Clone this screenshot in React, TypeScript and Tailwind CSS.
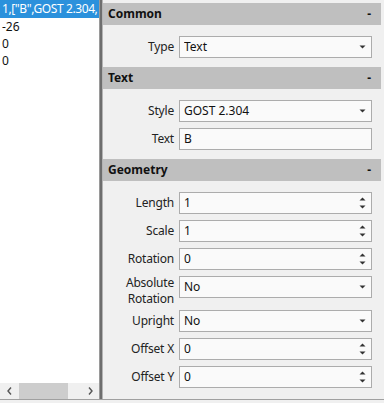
import React from 'react';

const font = { fontFamily: '"Noto Sans", "Open Sans", Arial, sans-serif' };

function DropArrow() {
  return (
    <svg width="7" height="4" viewBox="0 0 7 4" className="shrink-0">
      <path d="M0.5 0.5 L6.5 0.5 L3.5 3.5 Z" fill="#333" />
    </svg>
  );
}

function Spin() {
  return (
    <div className="flex flex-col justify-between h-full py-[4px] shrink-0">
      <svg width="7" height="4" viewBox="0 0 7 4">
        <path d="M0.5 3.5 L6.5 3.5 L3.5 0.5 Z" fill="#333" />
      </svg>
      <svg width="7" height="4" viewBox="0 0 7 4">
        <path d="M0.5 0.5 L6.5 0.5 L3.5 3.5 Z" fill="#333" />
      </svg>
    </div>
  );
}

type Kind = 'combo' | 'spin' | 'text';

function Field({ value, kind }: { value: string; kind: Kind }) {
  return (
    <div className="w-[193px] h-[22px] shrink-0 border border-[#acacac] bg-[#fafafa] flex items-center pl-[4px] pr-[5px] text-[12px] text-[#111]">
      <span className="flex-1 truncate">{value}</span>
      {kind === 'combo' && <DropArrow />}
      {kind === 'spin' && <Spin />}
    </div>
  );
}

function Row({ label, value, kind, tall }: { label: React.ReactNode; value: string; kind: Kind; tall?: boolean }) {
  return (
    <div className={`flex items-start ${tall ? 'h-[28px]' : 'h-[22px]'}`}>
      <div
        className={`w-[71px] shrink-0 text-right text-[12px] text-[#222] tracking-[-0.2px] ${tall ? 'leading-[16px] -mt-[1px]' : 'leading-[22px]'}`}
      >
        {label}
      </div>
      <div className="w-[5px] shrink-0" />
      <Field value={value} kind={kind} />
    </div>
  );
}

function Section({ title, children }: { title: string; children: React.ReactNode }) {
  return (
    <div className="flex flex-col">
      <div className="h-[22px] bg-[#bfbfbf] flex items-center justify-between px-[5px] text-[12px] font-bold text-[#111]">
        <span>{title}</span>
        <span className="pr-[5px]">-</span>
      </div>
      <div className="flex flex-col gap-[6px] pt-[11px] pb-[9px]">{children}</div>
    </div>
  );
}

export default function App() {
  const rows = ['-26', '0', '0'];
  return (
    <div className="w-[384px] h-[403px] bg-[#f0f0f0] flex flex-col overflow-hidden" style={font}>
      <div className="flex h-[399px]">
        {/* list */}
        <div className="w-[100px] shrink-0 bg-white flex flex-col border-r border-[#9a9a9a]">
          <div className="flex-1 overflow-hidden text-[12px] text-[#111]">
            <div className="h-[18px] bg-[#2b91dc] text-white pl-[2px] leading-[18px] whitespace-nowrap overflow-hidden tracking-[-0.4px]">
              1,["B",GOST 2.304,
            </div>
            {rows.map((r, i) => (
              <div key={i} className="h-[17px] pl-[2px] leading-[17px] whitespace-nowrap">
                {r}
              </div>
            ))}
          </div>
          <div className="h-[16px] bg-[#f0f0f0] flex items-center">
            <div className="w-[19px] flex justify-center">
              <svg width="5" height="8" viewBox="0 0 5 8">
                <path d="M4 0.5 L1 4 L4 7.5" stroke="#555" strokeWidth="1.4" fill="none" />
              </svg>
            </div>
            <div className="w-[49px] h-full bg-[#cdcdcd]" />
            <div className="flex-1" />
            <div className="w-[17px] flex justify-center">
              <svg width="5" height="8" viewBox="0 0 5 8">
                <path d="M1 0.5 L4 4 L1 7.5" stroke="#555" strokeWidth="1.4" fill="none" />
              </svg>
            </div>
          </div>
        </div>
        {/* splitter */}
        <div className="w-[2px] shrink-0 bg-[#6e6e6e]" />
        <div className="w-[1px] shrink-0 bg-[#b4b4b4]" />
        {/* property panel */}
        <div className="flex-1 flex flex-col pt-[3px] pr-[3px]">
          <div className="flex flex-col border-b border-[#a8a8a8] pb-[3px]">
            <Section title="Common">
              <Row label="Type" value="Text" kind="combo" />
            </Section>
            <Section title="Text">
              <Row label="Style" value="GOST 2.304" kind="combo" />
              <Row label="Text" value="B" kind="text" />
            </Section>
            <Section title="Geometry">
              <Row label="Length" value="1" kind="spin" />
              <Row label="Scale" value="1" kind="spin" />
              <Row label="Rotation" value="0" kind="spin" />
              <Row
                label={
                  <>
                    Absolute
                    <br />
                    Rotation
                  </>
                }
                value="No"
                kind="combo"
                tall
              />
              <Row label="Upright" value="No" kind="combo" />
              <Row label="Offset X" value="0" kind="spin" />
              <Row label="Offset Y" value="0" kind="spin" />
            </Section>
          </div>
        </div>
      </div>
      <div className="h-[4px] border-t border-[#a0a0a0] bg-[#f0f0f0]" />
    </div>
  );
}
